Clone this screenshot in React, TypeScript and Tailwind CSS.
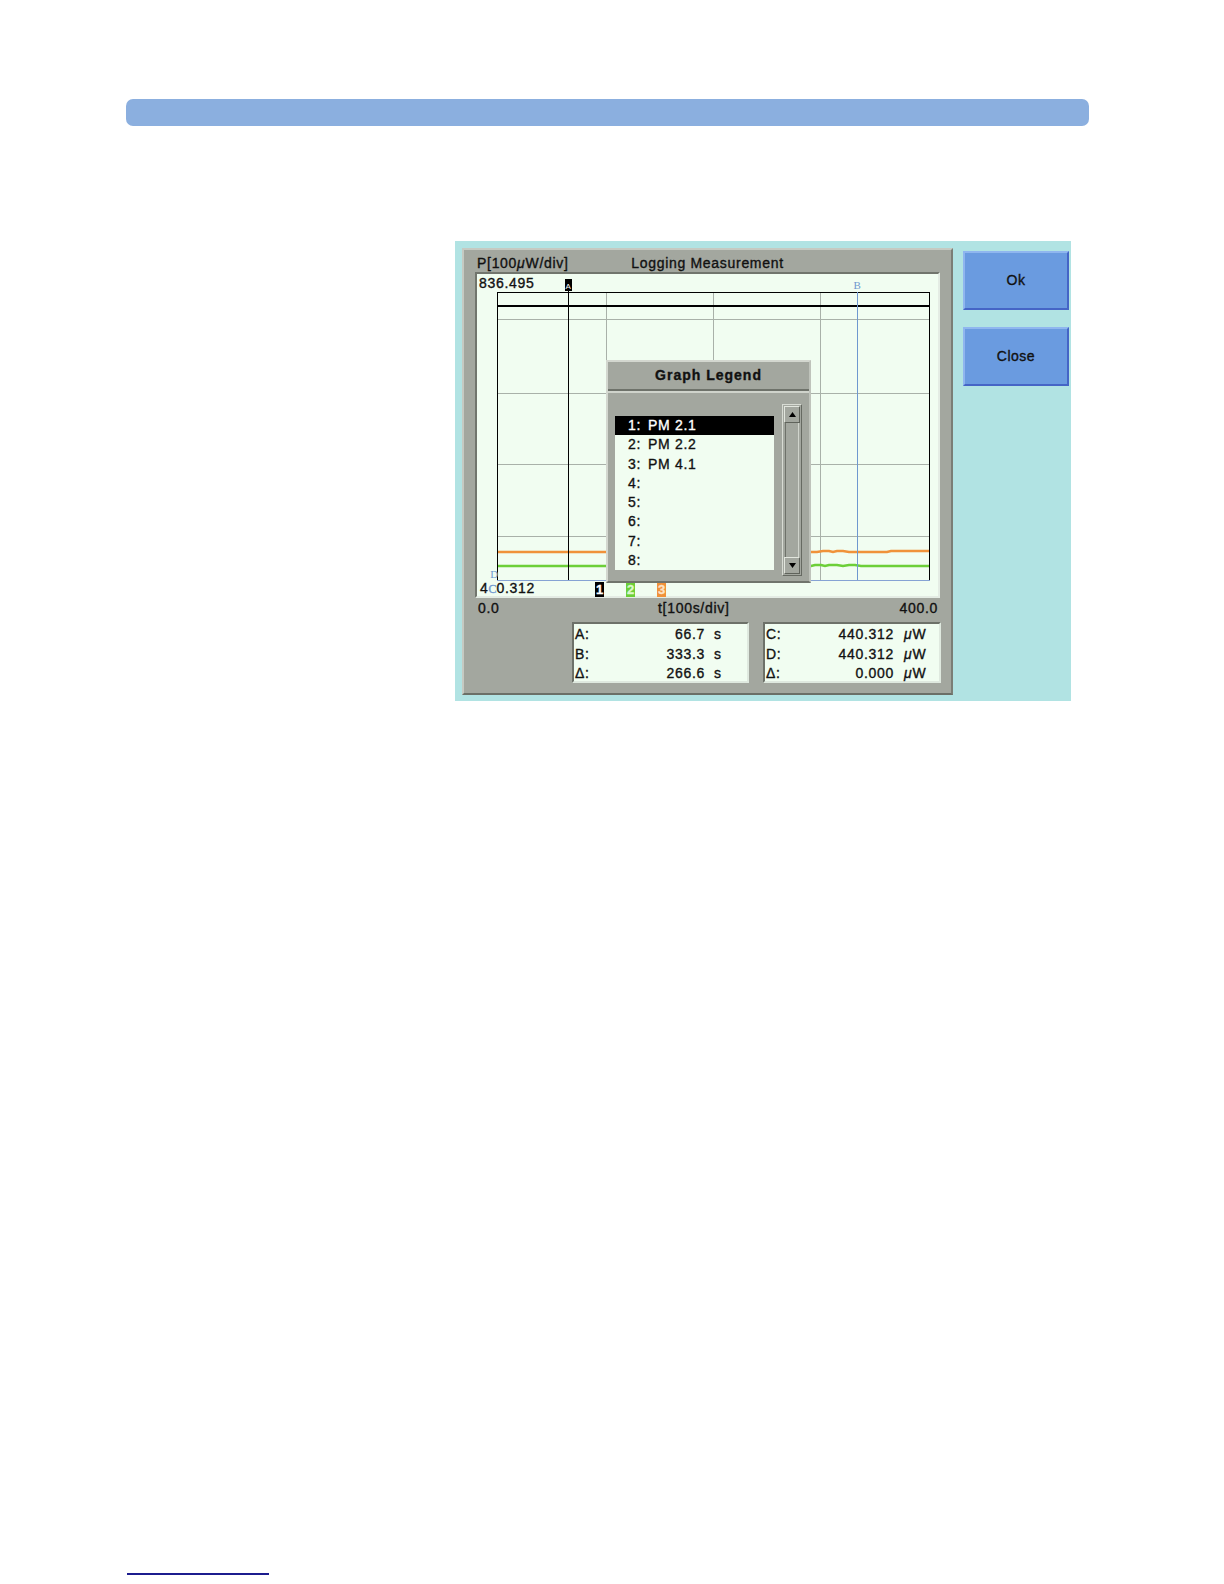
import React from "react";

type ReadoutRow = [string, string];

const legendRows = ["PM 2.1", "PM 2.2", "PM 4.1", "", "", "", "", ""];

function Mu() {
  return <span className="italic">μ</span>;
}

function GraphCanvas() {
  const hGrid = [45, 119, 190, 262];
  const vGrid = [129, 236, 343];
  return (
    <svg width="461" height="322" className="absolute left-0 top-0" shapeRendering="crispEdges">
      {hGrid.map((y) => (
        <line key={y} x1="20" x2="452" y1={y + 0.5} y2={y + 0.5} stroke="#a9b1a9" />
      ))}
      {vGrid.map((x) => (
        <line key={x} x1={x + 0.5} x2={x + 0.5} y1="18" y2="306" stroke="#a9b1a9" />
      ))}
      <line x1="20" x2="453" y1="18.5" y2="18.5" stroke="#000" />
      <line x1="20.5" x2="20.5" y1="18" y2="306" stroke="#000" />
      <line x1="452.5" x2="452.5" y1="18" y2="306" stroke="#000" />
      <line x1="20" x2="453" y1="32" y2="32" stroke="#000" strokeWidth="2" />
      <line x1="20" x2="453" y1="306.5" y2="306.5" stroke="#86a3d4" />

      {/* traces */}
      <polyline
        points="21,278 340,278 346,277 352,277 356,278 360,277 366,277 372,278 410,278 414,277 452,277"
        stroke="#f0923a"
        strokeWidth="2.5"
        fill="none"
        shapeRendering="auto"
      />
      <polyline
        points="21,292 334,292 338,291 344,291 348,292 352,291 360,291 366,292 372,291 378,291 384,292 452,292"
        stroke="#6ccf38"
        strokeWidth="2.5"
        fill="none"
        shapeRendering="auto"
      />

      {/* cursor A */}
      <line x1="91.5" x2="91.5" y1="14" y2="306" stroke="#000" />
      <rect x="88" y="5" width="7" height="12" fill="#000" />
      <text x="91.5" y="14.5" fontSize="8" fill="#fff" textAnchor="middle" fontFamily="Liberation Sans, sans-serif">
        A
      </text>

      {/* cursor B */}
      <line x1="380.5" x2="380.5" y1="18" y2="306" stroke="#6f98cf" />
      <text x="380.5" y="15" fontSize="11" fill="#6f98cf" textAnchor="middle" fontFamily="Liberation Serif, serif">
        B
      </text>

      {/* cursor D */}
      <text x="17.5" y="304" fontSize="11" fill="#6f98cf" textAnchor="middle" fontFamily="Liberation Serif, serif">
        D
      </text>
    </svg>
  );
}

function Scrollbar() {
  return (
    <div className="ml-[8px] flex h-[172px] w-[20px] flex-col border border-t-[#d8dcd4] border-l-[#d8dcd4] border-r-[#666a62] border-b-[#666a62] bg-[#a3a79f] p-[1px]">
      <div className="flex h-[17px] items-center justify-center border border-t-[#e2e6de] border-l-[#e2e6de] border-r-[#5f635b] border-b-[#5f635b]">
        <svg width="7" height="5">
          <path d="M0 5 L3.5 0 L7 5Z" fill="#000" />
        </svg>
      </div>
      <div className="mx-[1px] flex-1 border-x border-l-[#6e726a] border-r-[#d0d4cc]" />
      <div className="flex h-[17px] items-center justify-center border border-t-[#e2e6de] border-l-[#e2e6de] border-r-[#5f635b] border-b-[#5f635b]">
        <svg width="7" height="5">
          <path d="M0 0 L3.5 5 L7 0Z" fill="#000" />
        </svg>
      </div>
    </div>
  );
}

function LegendDialog() {
  return (
    <div className="absolute left-[129px] top-[86px] z-10 flex h-[223px] w-[205px] flex-col border-2 border-t-[#d3d7cf] border-l-[#d3d7cf] border-r-[#bfc3bb] border-b-[#70746c] bg-[#a3a79f]">
      <div className="flex h-[27px] items-center justify-center font-bold tracking-[1px]">Graph Legend</div>
      <div className="h-[2px] bg-[#6e726a]" />
      <div className="h-[2px] bg-[#cfd3cb]" />
      <div className="flex items-start pl-[7px] pt-[11px]">
        <div className="mt-[12px] h-[154px] w-[159px] bg-[#f1fdf1]">
          {legendRows.map((name, i) => (
            <div
              key={i}
              className={
                i === 0
                  ? "flex h-[19.25px] items-center bg-black pl-[13px] text-white"
                  : "flex h-[19.25px] items-center pl-[13px]"
              }
            >
              <span className="w-[20px]">{i + 1}:</span>
              <span>{name}</span>
            </div>
          ))}
        </div>
        <Scrollbar />
      </div>
    </div>
  );
}

function PlotArea() {
  return (
    <div className="ml-[11px] h-[326px] w-[465px] border-2 border-t-[#71756d] border-l-[#71756d] border-r-[#e4ece4] border-b-[#e4ece4] bg-[#f1fdf1]">
      <div className="relative h-full w-full">
        <GraphCanvas />
        <span className="absolute left-[2px] top-[1px] leading-[16px]">836.495</span>
        <span className="absolute left-[3px] top-[306px] flex items-baseline leading-[16px]">
          <span>4</span>
          <span className="font-['Liberation_Serif',serif] text-[12px] tracking-normal text-[#6f98cf]">C</span>
          <span>0.312</span>
        </span>
        <span className="absolute left-[118px] top-[308px] flex h-[15px] w-[9px] items-center justify-center bg-black text-[13px] font-bold tracking-normal text-white">
          1
        </span>
        <span className="absolute left-[149px] top-[308px] flex h-[15px] w-[9px] items-center justify-center bg-[#6ccf38] text-[13px] font-bold tracking-normal text-[#dcf7cc]">
          2
        </span>
        <span className="absolute left-[180px] top-[308px] flex h-[15px] w-[9px] items-center justify-center bg-[#f0923a] text-[13px] font-bold tracking-normal text-[#fde2c6]">
          3
        </span>
        <LegendDialog />
      </div>
    </div>
  );
}

function Readout({
  rows,
  unit,
  valueW,
  unitGap,
  width,
}: {
  rows: ReadoutRow[];
  unit: React.ReactNode;
  valueW: string;
  unitGap: string;
  width: string;
}) {
  return (
    <div
      className={`${width} h-[61px] border-2 border-t-[#6d7169] border-l-[#6d7169] border-r-[#dfe9df] border-b-[#dfe9df] bg-[#f1fdf1] pt-[0.5px]`}
    >
      {rows.map(([label, value]) => (
        <div key={label} className="flex h-[19.5px] items-center leading-[16px]">
          <span className="w-[40px] pl-[1px]">{label}</span>
          <span className={`${valueW} text-right`}>{value}</span>
          <span className={unitGap}>{unit}</span>
        </div>
      ))}
    </div>
  );
}

function MeasurementPanel() {
  return (
    <div className="flex h-[447px] w-[491px] flex-col border-2 border-t-[#c6cac2] border-l-[#c6cac2] border-r-[#7a7e76] border-b-[#6b6f67] bg-[#a3a79f]">
      <div className="grid h-[22px] grid-cols-[1fr_auto_1fr] pt-[5px] leading-[16px]">
        <span className="pl-[13px]">
          P[100<Mu />W/div]
        </span>
        <span>Logging Measurement</span>
        <span />
      </div>
      <PlotArea />
      <div className="ml-[14px] mt-[1.5px] flex w-[460px] leading-[16px]">
        <span className="w-[180px]">0.0</span>
        <span>t[100s/div]</span>
        <span className="ml-auto">400.0</span>
      </div>
      <div className="ml-[108px] mt-[6.5px] flex gap-[14px]">
        <Readout
          width="w-[177px]"
          valueW="w-[91px]"
          unitGap="ml-[9px]"
          unit="s"
          rows={[
            ["A:", "66.7"],
            ["B:", "333.3"],
            ["Δ:", "266.6"],
          ]}
        />
        <Readout
          width="w-[178px]"
          valueW="w-[89px]"
          unitGap="ml-[10px]"
          unit={
            <>
              <Mu />W
            </>
          }
          rows={[
            ["C:", "440.312"],
            ["D:", "440.312"],
            ["Δ:", "0.000"],
          ]}
        />
      </div>
    </div>
  );
}

function SoftButton({ label }: { label: string }) {
  return (
    <div className="flex h-[59px] w-[106px] items-center justify-center border-2 border-t-[#8fb6ef] border-l-[#8fb6ef] border-r-[#4565c6] border-b-[#4565c6] bg-[#6a9be0] tracking-[0.5px]">
      {label}
    </div>
  );
}

export default function App() {
  return (
    <div className="h-[1584px] w-[1224px] overflow-hidden bg-white pt-[99px] font-['Liberation_Sans',Arial,sans-serif] text-[14px] tracking-[0.7px] text-[#111] [-webkit-text-stroke:0.35px_currentColor]">
      <div className="ml-[126px] h-[27px] w-[963px] rounded-[7px] bg-[#8bafdf]" />

      <div className="ml-[455px] mt-[115px] flex h-[460px] w-[616px] bg-[#b1e3e3] pl-[7px] pt-[7px]">
        <MeasurementPanel />
        <div className="ml-[10px] mt-[3px] flex flex-col gap-[17px]">
          <SoftButton label="Ok" />
          <SoftButton label="Close" />
        </div>
      </div>

      <div className="ml-[127px] mt-[872px] h-[2px] w-[142px] bg-[#1c1c8e]" />
    </div>
  );
}
